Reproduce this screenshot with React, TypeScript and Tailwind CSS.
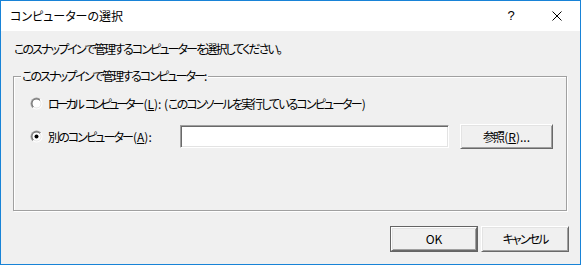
import React from "react";

function J({ children, className }: { children: React.ReactNode; className?: string }) {
  return <span className={"tracking-[-1.9px] " + (className ?? "")}>{children}</span>;
}

function K({ children, className }: { children: React.ReactNode; className?: string }) {
  return <span className={"tracking-[-3px] " + (className ?? "")}>{children}</span>;
}

function Radio({ checked, id }: { checked?: boolean; id: string }) {
  return (
    <svg width="13" height="13" viewBox="0 0 13 13" className="shrink-0">
      <defs>
        <linearGradient id={id + "o"} x1="0" y1="0" x2="1" y2="1">
          <stop offset="0.5" stopColor="#a0a0a0" />
          <stop offset="0.5" stopColor="#ffffff" />
        </linearGradient>
        <linearGradient id={id + "i"} x1="0" y1="0" x2="1" y2="1">
          <stop offset="0.5" stopColor="#696969" />
          <stop offset="0.5" stopColor="#e3e3e3" />
        </linearGradient>
      </defs>
      <circle cx="6.5" cy="6.5" r="6" fill={`url(#${id}o)`} />
      <circle cx="6.5" cy="6.5" r="5" fill={`url(#${id}i)`} />
      <circle cx="6.5" cy="6.5" r="4" fill="#ffffff" />
      {checked && <circle cx="6.5" cy="6.5" r="2" fill="#000000" />}
    </svg>
  );
}

function ClassicButton({ children, className }: { children: React.ReactNode; className?: string }) {
  return (
    <div
      className={
        "flex items-center justify-center bg-[#f0f0f0] border border-t-white border-l-white border-r-[#696969] border-b-[#696969] shadow-[inset_1px_1px_0_#e3e3e3,inset_-1px_-1px_0_#a0a0a0] " +
        (className ?? "")
      }
    >
      {children}
    </div>
  );
}

export default function App() {
  return (
    <div className="w-[581px] h-[265px] border border-[#1883d7] bg-[#f0f0f0] flex flex-col font-['Noto_Sans_CJK_JP',sans-serif] text-[12px] leading-[16px] text-black [font-feature-settings:'palt']">
      {/* Title bar */}
      <div className="h-[30px] bg-white flex items-center shrink-0">
        <div className="pl-[9px] flex-1">コンピューターの選択</div>
        <div className="w-[46px] h-[30px] flex items-center justify-center font-['Liberation_Sans',sans-serif] text-[13px]">
          ?
        </div>
        <div className="w-[46px] h-[30px] flex items-center justify-center">
          <svg width="10" height="10" viewBox="0 0 10 10">
            <path d="M0.5 0.5 L9.5 9.5 M9.5 0.5 L0.5 9.5" stroke="#000" strokeWidth="1" fill="none" />
          </svg>
        </div>
      </div>

      {/* Description */}
      <div className="mt-[10px] pl-[13px]">
        <J>このスナップインで管理するコンピューターを選択してください。</J>
      </div>

      {/* Group box */}
      <div className="relative mt-[19px] ml-[12px] w-[554px] h-[135px] border border-[#a0a0a0] shadow-[1px_1px_0_#fff,inset_1px_1px_0_#fff] pl-[16px] pt-[18px] flex flex-col">
        <div className="absolute left-[7px] -top-[9px] px-[1px] bg-[#f0f0f0]">
          <J>このスナップインで管理するコンピューター</J>:
        </div>

        <div className="h-[17px] flex items-center gap-[5px]">
          <Radio id="r1" />
          <span className="whitespace-nowrap">
            <K className="mr-[3px]">ローカル</K>
            <K className="mr-[2px]">コンピューター</K>(<span className="underline">L</span>): (
            <J className="mr-[1px]">このコンソールを実行しているコンピューター</J>)
          </span>
        </div>

        <div className="mt-[12px] h-[25px] flex items-center">
          <Radio id="r2" checked />
          <span className="ml-[5px] w-[132px] whitespace-nowrap">
            <J className="mr-[1px]">別のコンピューター</J>(<span className="underline">A</span>):
          </span>
          <div className="w-[269px] h-[23px] bg-white border border-t-[#a0a0a0] border-l-[#a0a0a0] border-r-white border-b-white shadow-[inset_1px_1px_0_#696969,inset_-1px_-1px_0_#e3e3e3]" />
          <ClassicButton className="ml-[11px] w-[93px] h-[25px]">
            <span className="whitespace-nowrap">
              <J className="mr-[1px]">参照</J>(<span className="underline">R</span>)...
            </span>
          </ClassicButton>
        </div>
      </div>

      {/* Bottom buttons */}
      <div className="mt-[15px] flex justify-end gap-[3px] pr-[11px]">
        <div className="w-[88px] h-[26px] border border-[#646464] flex">
          <ClassicButton className="flex-1">OK</ClassicButton>
        </div>
        <ClassicButton className="w-[88px] h-[26px]">
          <J>キャンセル</J>
        </ClassicButton>
      </div>
    </div>
  );
}
